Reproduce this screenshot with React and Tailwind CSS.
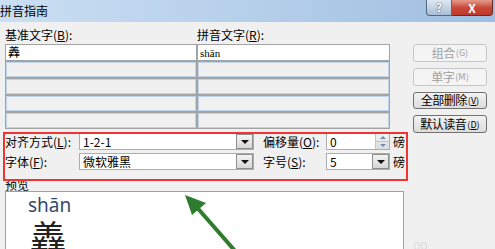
import React from "react";

const font = { fontFamily: '"Noto Sans CJK SC", "Noto Sans", sans-serif' };

const Acc = ({ children }) => <span className="underline underline-offset-1">{children}</span>;

const DropButton = () => (
  <div className="flex h-full w-[17px] shrink-0 items-center justify-center border border-[#8e8f8f] bg-gradient-to-b from-[#f4f4f4] to-[#d6d6d6]">
    <div className="h-0 w-0 border-x-[4px] border-t-[4px] border-x-transparent border-t-[#111]" />
  </div>
);

const Combo = ({ value, className }) => (
  <div className={"flex h-[17px] items-stretch border border-[#abadb3] bg-white " + className}>
    <div className="flex-1 pl-[3px] text-[12px] leading-[15px] text-black">{value}</div>
    <DropButton />
  </div>
);

const Spinner = ({ value }) => (
  <div className="flex h-[17px] w-[64px] items-stretch border border-[#abadb3] bg-white">
    <div className="flex-1 pl-[3px] text-[12px] leading-[15px] text-black">{value}</div>
    <div className="flex w-[14px] flex-col border-l border-[#c5c5c5] bg-gradient-to-b from-[#f2f2f2] to-[#dcdcdc]">
      <div className="flex flex-1 items-center justify-center border-b border-[#c5c5c5]">
        <div className="h-0 w-0 border-x-[3px] border-b-[3px] border-x-transparent border-b-[#6f8fb8]" />
      </div>
      <div className="flex flex-1 items-center justify-center">
        <div className="h-0 w-0 border-x-[3px] border-t-[3px] border-x-transparent border-t-[#6f8fb8]" />
      </div>
    </div>
  </div>
);

const SideButton = ({ label, acc, disabled }) => (
  <div
    className={
      "flex h-[18px] w-[74px] items-center justify-center whitespace-nowrap rounded-[3px] border text-[12px] leading-none " +
      (disabled
        ? "border-[#c6c6c6] bg-[#f4f4f4] text-[#a0a0a0]"
        : "border-[#707070] bg-gradient-to-b from-[#f2f2f2] to-[#dddddd] text-black")
    }
  >
    <span className="tracking-[-0.5px]">{label}</span>
    <span className="ml-[1px] text-[9px]">({acc})</span>
  </div>
);

const Cell = ({ children, first }) =>
  first ? (
    <div className="h-[17px] border border-[#a3a3a3] bg-white px-[2px] text-[12px] leading-[14px] text-black">
      {children}
    </div>
  ) : (
    <div className="h-[17px] border border-[#a3a3a3]">
      <div className="h-full border border-[#bfd5ec] bg-[#f0f0f0]" />
    </div>
  );

export default function App() {
  const rows = [0, 1, 2, 3, 4];
  return (
    <div className="relative h-[249px] w-[495px] overflow-hidden bg-[#f0f0f0]" style={font}>
      {/* Title bar */}
      <div className="flex h-[22px] items-start justify-between bg-gradient-to-r from-[#cadff3] via-[#b6cfea] to-[#9fbee1]">
        <div className="pt-[3px] text-[12px] leading-[15px] text-black">拼音指南</div>
        <div className="mr-[2px] flex">
          <div className="flex h-[16px] w-[26px] items-center justify-center rounded-bl-[4px] border border-t-0 border-[#56687f] bg-gradient-to-b from-[#dfe9f4] to-[#a9bdd5] text-[11px] font-bold leading-none text-white [text-shadow:0_0_2px_#334]">
            ?
          </div>
          <div className="flex h-[16px] w-[41px] items-center justify-center rounded-br-[4px] border border-l-0 border-t-0 border-[#6b2a22] bg-gradient-to-b from-[#e59a8c] via-[#c8493a] to-[#c0392b] text-[12px] font-bold leading-none text-white">
            X
          </div>
        </div>
      </div>

      {/* Table and side buttons */}
      <div className="flex h-[111px]">
        <div className="ml-[5px] w-[385px]">
          <div className="grid h-[22px] grid-cols-[192px_193px] pt-[6px] text-[12px] leading-[14px] text-black">
            <div>
              基准文字(<Acc>B</Acc>):
            </div>
            <div>
              拼音文字(<Acc>R</Acc>):
            </div>
          </div>
          <div className="grid grid-cols-[192px_193px]">
            {rows.map((r) => (
              <React.Fragment key={r}>
                <Cell first={r === 0}>{r === 0 ? "羴" : null}</Cell>
                <Cell first={r === 0}>
                  {r === 0 ? (
                    <span className="text-[11px]" style={{ fontFamily: '"Liberation Serif", serif' }}>
                      shān
                    </span>
                  ) : null}
                </Cell>
              </React.Fragment>
            ))}
          </div>
        </div>
        <div className="ml-[23px] mt-[22px] flex flex-col gap-[6px]">
          <SideButton label="组合" acc="G" disabled />
          <SideButton label="单字" acc="M" disabled />
          <SideButton label="全部删除" acc={<Acc>V</Acc>} />
          <SideButton label="默认读音" acc={<Acc>D</Acc>} />
        </div>
      </div>

      {/* Form rows */}
      <div className="ml-[5px] flex flex-col gap-[3px] text-[12px] text-black">
        <div className="flex h-[17px] items-center">
          <div className="w-[74px]">
            对齐方式(<Acc>L</Acc>):
          </div>
          <Combo value="1-2-1" className="w-[175px]" />
          <div className="ml-[9px] w-[63px]">
            偏移量(<Acc>O</Acc>):
          </div>
          <Spinner value="0" />
          <div className="ml-[3px]">磅</div>
        </div>
        <div className="flex h-[17px] items-center">
          <div className="w-[74px]">
            字体(<Acc>F</Acc>):
          </div>
          <Combo value="微软雅黑" className="w-[175px]" />
          <div className="ml-[9px] w-[63px]">
            字号(<Acc>S</Acc>):
          </div>
          <Combo value="5" className="w-[64px]" />
          <div className="ml-[3px]">磅</div>
        </div>
      </div>

      {/* Preview */}
      <div className="ml-[5px] pt-[8px] text-[12px] leading-[13px] text-black">预览</div>
      <div className="ml-[5px] h-[80px] w-[399px] border border-[#a0a0a0] bg-white pl-[22px] pt-[4px]">
        <div className="text-[19px] leading-[18px] text-[#34496a]" style={{ fontFamily: '"Noto Sans", sans-serif' }}>
          shān
        </div>
        <div className="ml-[2px] mt-[4px] text-[36px] leading-[36px] text-[#222]">羴</div>
      </div>

      {/* Annotation: red frame */}
      <div className="pointer-events-none absolute left-[3px] top-[132px] h-[49px] w-[405px] border-2 border-[#ef3434]" />

      {/* Annotation: green arrow */}
      <svg className="pointer-events-none absolute left-[178px] top-[190px]" width="70" height="62" viewBox="0 0 70 62">
        <line x1="58" y1="62" x2="16" y2="14" stroke="#2e7d2e" strokeWidth="4" />
        <polygon points="7,5 28,13 14,25" fill="#2e7d2e" />
      </svg>

      {/* faint marks bottom right */}
      <div className="absolute left-[414px] top-[242px] flex gap-[1px]">
        <div className="h-[8px] w-[6px] rounded-full border border-[#d8d8d8]" />
        <div className="h-[8px] w-[6px] rounded-full border border-[#d8d8d8]" />
      </div>
    </div>
  );
}
